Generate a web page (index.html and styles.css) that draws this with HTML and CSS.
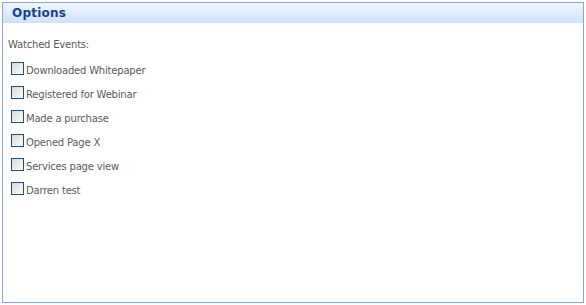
FILE: index.html
```html
<!DOCTYPE html>
<html lang="en">
<head>
    <meta charset="UTF-8">
    <title>Options</title>
    <link rel="stylesheet" href="styles.css">
</head>
<body>
    <div class="panel">
        <div class="panel-header">Options</div>
        <div class="panel-body">
            <div class="field-label">Watched Events:</div>
            <ul class="event-list">
                <li><span class="check"></span>Downloaded Whitepaper</li>
                <li><span class="check"></span>Registered for Webinar</li>
                <li><span class="check"></span>Made a purchase</li>
                <li><span class="check"></span>Opened Page X</li>
                <li><span class="check"></span>Services page view</li>
                <li><span class="check"></span>Darren test</li>
            </ul>
        </div>
    </div>
</body>
</html>
```

FILE: styles.css
```css
body {
    margin: 0;
    padding: 2px;
    font-family: "DejaVu Sans", Tahoma, sans-serif;
    font-size: 10px;
    letter-spacing: -0.2px;
    background: #fff;
}
.panel {
    width: 580px;
    height: 299px;
    border: 1px solid #8ea4d2;
}
.panel-header {
    height: 20px;
    line-height: 21px;
    padding-left: 9px;
    font-weight: bold;
    font-size: 12px;
    letter-spacing: 0.2px;
    color: #15428b;
    background: linear-gradient(to bottom, #f0f6fe, #cde2fb);
}
.panel-body {
    padding: 14px 0 0 5px;
    color: #5a5a5a;
}
.field-label {
    height: 16px;
    line-height: 16px;
}
.event-list {
    list-style: none;
    margin: 5px 0 0;
    padding: 0;
}
.event-list li {
    display: flex;
    align-items: center;
    height: 24px;
}
.check {
    width: 11px;
    height: 11px;
    margin: 0 2px 4px 3px;
    border: 1px solid #1c4f7e;
    background: linear-gradient(135deg, #d6d6d2, #ffffff);
}
```
